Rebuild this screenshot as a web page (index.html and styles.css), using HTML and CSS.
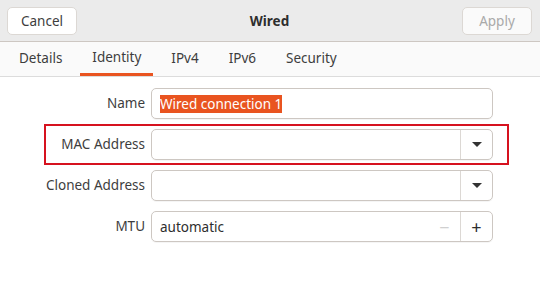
FILE: index.html
```html
<!DOCTYPE html>
<html lang="en">
<head>
  <meta charset="UTF-8">
  <title>Wired</title>
  <link rel="stylesheet" href="styles.css">
</head>
<body>
  <div class="window">
    <div class="headerbar">
      <button class="btn">Cancel</button>
      <div class="title">Wired</div>
      <button class="btn" disabled>Apply</button>
    </div>

    <div class="tabs">
      <div class="tab">Details</div>
      <div class="tab active">Identity</div>
      <div class="tab">IPv4</div>
      <div class="tab">IPv6</div>
      <div class="tab">Security</div>
    </div>

    <div class="form">
      <div class="row">
        <label>Name</label>
        <div class="entry"><span class="selected">Wired connection 1</span></div>
      </div>

      <div class="row highlight">
        <label>MAC Address</label>
        <div class="entry combo">
          <div class="value"></div>
          <div class="side"><span class="arrow"></span></div>
        </div>
      </div>

      <div class="row">
        <label>Cloned Address</label>
        <div class="entry combo">
          <div class="value"></div>
          <div class="side"><span class="arrow"></span></div>
        </div>
      </div>

      <div class="row">
        <label>MTU</label>
        <div class="entry combo">
          <div class="value">automatic</div>
          <div class="side minus">&minus;</div>
          <div class="side plus">+</div>
        </div>
      </div>
    </div>
  </div>
</body>
</html>
```

FILE: styles.css
```css
body {
  margin: 0;
  font-family: "Noto Sans", "DejaVu Sans", sans-serif;
  font-size: 13.5px;
  color: #3d3d3d;
  background-color: #ffffff;
}

.window {
  width: 540px;
  height: 302px;
  background-color: #ffffff;
}

.headerbar {
  height: 42px;
  box-sizing: border-box;
  background-color: #ebebeb;
  border-bottom: 1px solid #cdc7c2;
  display: flex;
  align-items: center;
  justify-content: space-between;
  padding: 0 8px 0 7px;
}

.btn {
  width: 70px;
  height: 28px;
  font-family: inherit;
  font-size: 13.5px;
  color: #3d3d3d;
  background-color: #ffffff;
  border: 1px solid #dcd8d4;
  border-radius: 5px;
}

.btn:disabled {
  color: #a9a9a9;
  background-color: #fafafa;
}

.title {
  font-weight: bold;
  color: #2e2e2e;
}

.tabs {
  height: 35px;
  box-sizing: border-box;
  display: flex;
  background-color: #fafafa;
  border-bottom: 1px solid #dcdcdc;
  padding-left: 4px;
}

.tab {
  padding: 0 15px;
  line-height: 33px;
  color: #3d3d3d;
  white-space: nowrap;
}

.tab.active {
  border-bottom: 3px solid #e95420;
  line-height: 31px;
  padding: 0 12px;
  margin: 0 3px;
}

.form {
  padding-top: 6px;
}

.row {
  width: 465px;
  height: 41px;
  box-sizing: border-box;
  margin-left: 44px;
  padding: 5px 16px 5px 0;
  display: flex;
  gap: 6px;
}

.row.highlight {
  outline: 2px solid #d6121f;
  outline-offset: -2px;
}

.row label {
  width: 101px;
  flex-shrink: 0;
  white-space: nowrap;
  text-align: right;
  line-height: 31px;
  color: #3d3d3d;
}

.entry {
  flex: 1;
  display: flex;
  align-items: center;
  box-sizing: border-box;
  border: 1px solid #cdc7c2;
  border-radius: 5px;
  box-shadow: 0 1px 0 rgba(0, 0, 0, 0.04);
  padding-left: 8px;
  color: #2e2e2e;
}

.selected {
  background-color: #e95420;
  color: #ffffff;
  line-height: 18px;
}

.combo {
  padding-left: 0;
}

.combo .value {
  flex: 1;
  padding-left: 8px;
}

.side {
  width: 31px;
  height: 100%;
  display: flex;
  align-items: center;
  justify-content: center;
  border-left: 1px solid #dcd8d4;
  font-size: 18px;
  color: #2e2e2e;
}

.side.minus {
  border-left: none;
  color: #d0d0d0;
}

.arrow {
  width: 0;
  height: 0;
  border-left: 5px solid transparent;
  border-right: 5px solid transparent;
  border-top: 5px solid #333333;
}
```
